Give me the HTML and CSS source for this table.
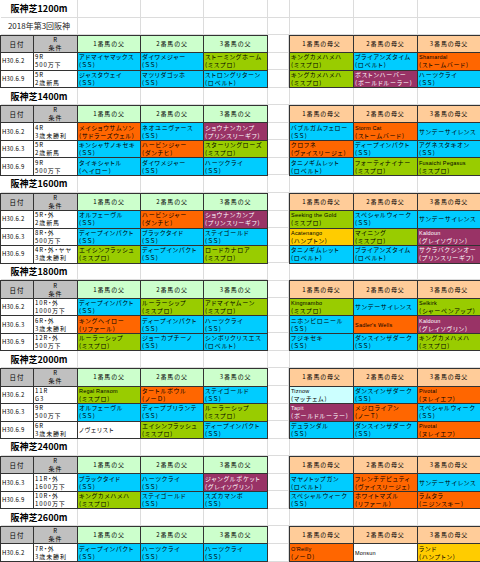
FILE: index.html
```html
<!DOCTYPE html>
<html lang="ja">
<head>
<meta charset="utf-8">
<title>阪神芝</title>
<link rel="stylesheet" href="styles.css">
</head>
<body>
<table class="sheet">
<colgroup>
<col class="c-date"><col class="c-r"><col class="c-a"><col class="c-a"><col class="c-b"><col class="c-gap"><col class="c-b"><col class="c-b"><col class="c-a">
</colgroup>
<tbody>
<!-- 1200m -->
<tr><td colspan="2" class="ttl">阪神芝1200m</td><td class="e"></td><td class="e"></td><td class="e"></td><td class="e"></td><td class="e"></td><td class="e"></td><td class="e"></td></tr>
<tr><td colspan="2" class="sub">2018年第3回阪神</td><td class="e"></td><td class="e"></td><td class="e"></td><td class="e"></td><td class="e"></td><td class="e"></td><td class="e"></td></tr>
<tr><td class="x hd big">日付</td><td class="x hd ctr">R<br>条件</td><td class="x hf ctr">1番馬の父</td><td class="x hf ctr">2番馬の父</td><td class="x hf ctr">3番馬の父</td><td class="e"></td><td class="x hm ctr">1番馬の母父</td><td class="x hm ctr">2番馬の母父</td><td class="x hm ctr">3番馬の母父</td></tr>
<tr><td class="x dt">H30.6.2</td><td class="x">9R<br>500万下</td><td class="x b">アドマイヤマックス<br>(ＳＳ)</td><td class="x b">ダイワメジャー<br>(ＳＳ)</td><td class="x g">ストーミングホーム<br>(ミスプロ)</td><td class="e"></td><td class="x g">キングカメハメハ<br>(ミスプロ)</td><td class="x b">ブライアンズタイム<br>(ロベルト)</td><td class="x o"><span class="en">Shamardal</span><br>(ストームバード)</td></tr>
<tr><td class="x dt">H30.6.9</td><td class="x">5R<br>2歳新馬</td><td class="x b">ジャスタウェイ<br>(ＳＳ)</td><td class="x b">マツリダゴッホ<br>(ＳＳ)</td><td class="x b">ストロングリターン<br>(ロベルト)</td><td class="e"></td><td class="x g">キングカメハメハ<br>(ミスプロ)</td><td class="x p">ボストンハーバー<br>(ボールドルーラー)</td><td class="x b">ハーツクライ<br>(ＳＳ)</td></tr>
<!-- 1400m -->
<tr><td colspan="2" class="ttl">阪神芝1400m</td><td class="e"></td><td class="e"></td><td class="e"></td><td class="e"></td><td class="e"></td><td class="e"></td><td class="e"></td></tr>
<tr><td class="x hd big">日付</td><td class="x hd ctr">R<br>条件</td><td class="x hf ctr">1番馬の父</td><td class="x hf ctr">2番馬の父</td><td class="x hf ctr">3番馬の父</td><td class="e"></td><td class="x hm ctr">1番馬の母父</td><td class="x hm ctr">2番馬の母父</td><td class="x hm ctr">3番馬の母父</td></tr>
<tr><td class="x dt">H30.6.2</td><td class="x">4R<br>3歳未勝利</td><td class="x o">メイショウサムソン<br>(サドラーズウェル)</td><td class="x b">ネオユニヴァース<br>(ＳＳ)</td><td class="x p">ショウナンカンプ<br>(プリンスリーギフ)</td><td class="e"></td><td class="x b">バブルガムフェロー<br>(ＳＳ)</td><td class="x o"><span class="en">Storm Cat</span><br>(ストームバード)</td><td class="x b">サンデーサイレンス</td></tr>
<tr><td class="x dt">H30.6.3</td><td class="x">5R<br>2歳新馬</td><td class="x b">キンシャサノキセキ<br>(ＳＳ)</td><td class="x o">ハービンジャー<br>(ダンチヒ)</td><td class="x g">スターリングローズ<br>(ミスプロ)</td><td class="e"></td><td class="x o">クロフネ<br>(ヴァイスリージェ)</td><td class="x b">ディープインパクト<br>(ＳＳ)</td><td class="x b">アグネスタキオン<br>(ＳＳ)</td></tr>
<tr><td class="x dt">H30.6.9</td><td class="x">9R<br>500万下</td><td class="x b">タイキシャトル<br>(ヘイロー)</td><td class="x b">ダイワメジャー<br>(ＳＳ)</td><td class="x b">ハーツクライ<br>(ＳＳ)</td><td class="e"></td><td class="x b">タニノギムレット<br>(ロベルト)</td><td class="x g">フォーティナイナー<br>(ミスプロ)</td><td class="x g"><span class="en">Fusaichi Pegasus</span><br>(ミスプロ)</td></tr>
<!-- 1600m -->
<tr><td colspan="2" class="ttl">阪神芝1600m</td><td class="e"></td><td class="e"></td><td class="e"></td><td class="e"></td><td class="e"></td><td class="e"></td><td class="e"></td></tr>
<tr><td class="x hd big">日付</td><td class="x hd ctr">R<br>条件</td><td class="x hf ctr">1番馬の父</td><td class="x hf ctr">2番馬の父</td><td class="x hf ctr">3番馬の父</td><td class="e"></td><td class="x hm ctr">1番馬の母父</td><td class="x hm ctr">2番馬の母父</td><td class="x hm ctr">3番馬の母父</td></tr>
<tr><td class="x dt">H30.6.2</td><td class="x">5R・外<br>2歳新馬</td><td class="x b">オルフェーヴル<br>(ＳＳ)</td><td class="x o">ハービンジャー<br>(ダンチヒ)</td><td class="x p">ショウナンカンプ<br>(プリンスリーギフ)</td><td class="e"></td><td class="x g"><span class="en">Seeking the Gold</span><br>(ミスプロ)</td><td class="x b">スペシャルウィーク<br>(ＳＳ)</td><td class="x b">サンデーサイレンス</td></tr>
<tr><td class="x dt">H30.6.3</td><td class="x">8R・外<br>500万下</td><td class="x b">ディープインパクト<br>(ＳＳ)</td><td class="x b">ブラックタイド<br>(ＳＳ)</td><td class="x b">ステイゴールド<br>(ＳＳ)</td><td class="e"></td><td class="x y"><span class="en">Acatenango</span><br>(ハンプトン)</td><td class="x g">マイニング<br>(ミスプロ)</td><td class="x p"><span class="en">Kaldoun</span><br>(グレイソヴリン)</td></tr>
<tr><td class="x dt">H30.6.9</td><td class="x">4R・外・ヤヤ<br>3歳未勝利</td><td class="x g">エイシンフラッシュ<br>(ミスプロ)</td><td class="x b">ディープインパクト<br>(ＳＳ)</td><td class="x g">ロードカナロア<br>(ミスプロ)</td><td class="e"></td><td class="x b">タニノギムレット<br>(ロベルト)</td><td class="x b">ブライアンズタイム<br>(ロベルト)</td><td class="x p">サクラバクシンオー<br>(プリンスリーギフ)</td></tr>
<!-- 1800m -->
<tr><td colspan="2" class="ttl">阪神芝1800m</td><td class="e"></td><td class="e"></td><td class="e"></td><td class="e"></td><td class="e"></td><td class="e"></td><td class="e"></td></tr>
<tr><td class="x hd big">日付</td><td class="x hd ctr">R<br>条件</td><td class="x hf ctr">1番馬の父</td><td class="x hf ctr">2番馬の父</td><td class="x hf ctr">3番馬の父</td><td class="e"></td><td class="x hm ctr">1番馬の母父</td><td class="x hm ctr">2番馬の母父</td><td class="x hm ctr">3番馬の母父</td></tr>
<tr><td class="x dt">H30.6.2</td><td class="x">10R・外<br>1000万下</td><td class="x b">ディープインパクト<br>(ＳＳ)</td><td class="x g">ルーラーシップ<br>(ミスプロ)</td><td class="x g">アドマイヤムーン<br>(ミスプロ)</td><td class="e"></td><td class="x g"><span class="en">Kingmambo</span><br>(ミスプロ)</td><td class="x b">サンデーサイレンス</td><td class="x g"><span class="en">Selkirk</span><br>(シャーペンアップ)</td></tr>
<tr><td class="x dt">H30.6.3</td><td class="x">6R・外<br>3歳未勝利</td><td class="x o">キングヘイロー<br>(リファール)</td><td class="x b">ディープインパクト<br>(ＳＳ)</td><td class="x b">ハーツクライ<br>(ＳＳ)</td><td class="e"></td><td class="x b">ニホンピロニール<br>(ＳＳ)</td><td class="x o"><span class="en">Sadler's Wells</span></td><td class="x p"><span class="en">Kaldoun</span><br>(グレイソヴリン)</td></tr>
<tr><td class="x dt">H30.6.9</td><td class="x">12R・外<br>500万下</td><td class="x g">ルーラーシップ<br>(ミスプロ)</td><td class="x b">ジョーカプチーノ<br>(ＳＳ)</td><td class="x b">シンボリクリスエス<br>(ロベルト)</td><td class="e"></td><td class="x b">フジキセキ<br>(ＳＳ)</td><td class="x b">ダンスインザダーク<br>(ＳＳ)</td><td class="x g">キングカメハメハ<br>(ミスプロ)</td></tr>
<!-- 2000m -->
<tr><td colspan="2" class="ttl">阪神芝2000m</td><td class="e"></td><td class="e"></td><td class="e"></td><td class="e"></td><td class="e"></td><td class="e"></td><td class="e"></td></tr>
<tr><td class="x hd big">日付</td><td class="x hd ctr">R<br>条件</td><td class="x hf ctr">1番馬の父</td><td class="x hf ctr">2番馬の父</td><td class="x hf ctr">3番馬の父</td><td class="e"></td><td class="x hm ctr">1番馬の母父</td><td class="x hm ctr">2番馬の母父</td><td class="x hm ctr">3番馬の母父</td></tr>
<tr><td class="x dt">H30.6.2</td><td class="x">11R<br>G3</td><td class="x g"><span class="en">Regal Ransom</span><br>(ミスプロ)</td><td class="x o">タートルボウル<br>(ノーＤ)</td><td class="x b">ステイゴールド<br>(ＳＳ)</td><td class="e"></td><td class="x c"><span class="en">Tiznow</span><br>(マッチェム)</td><td class="x b">ダンスインザダーク<br>(ＳＳ)</td><td class="x o"><span class="en">Pivotal</span><br>(ヌレイエフ)</td></tr>
<tr><td class="x dt">H30.6.3</td><td class="x">9R<br>500万下</td><td class="x b">オルフェーヴル<br>(ＳＳ)</td><td class="x b">ディープブリランテ<br>(ＳＳ)</td><td class="x g">ルーラーシップ<br>(ミスプロ)</td><td class="e"></td><td class="x p"><span class="en">Tapit</span><br>(ボールドルーラー)</td><td class="x o">メジロライアン<br>(ノーＴ)</td><td class="x b">スペシャルウィーク<br>(ＳＳ)</td></tr>
<tr><td class="x dt">H30.6.9</td><td class="x">6R<br>3歳未勝利</td><td class="x w">ノヴェリスト</td><td class="x g">エイシンフラッシュ<br>(ミスプロ)</td><td class="x b">ディープインパクト<br>(ＳＳ)</td><td class="e"></td><td class="x b">デュランダル<br>(ＳＳ)</td><td class="x b">ダンスインザダーク<br>(ＳＳ)</td><td class="x o"><span class="en">Pivotal</span><br>(ヌレイエフ)</td></tr>
<!-- 2400m -->
<tr><td colspan="2" class="ttl">阪神芝2400m</td><td class="e"></td><td class="e"></td><td class="e"></td><td class="e"></td><td class="e"></td><td class="e"></td><td class="e"></td></tr>
<tr><td class="x hd big">日付</td><td class="x hd ctr">R<br>条件</td><td class="x hf ctr">1番馬の父</td><td class="x hf ctr">2番馬の父</td><td class="x hf ctr">3番馬の父</td><td class="e"></td><td class="x hm ctr">1番馬の母父</td><td class="x hm ctr">2番馬の母父</td><td class="x hm ctr">3番馬の母父</td></tr>
<tr><td class="x dt">H30.6.3</td><td class="x">11R・外<br>1600万下</td><td class="x b">ブラックタイド<br>(ＳＳ)</td><td class="x b">ハーツクライ<br>(ＳＳ)</td><td class="x p">ジャングルポケット<br>(グレイソヴリン)</td><td class="e"></td><td class="x b">マヤノトップガン<br>(ロベルト)</td><td class="x o">フレンチデピュティ<br>(ヴァイスリージェ)</td><td class="x b">サンデーサイレンス</td></tr>
<tr><td class="x dt">H30.6.9</td><td class="x">10R・外<br>1000万下</td><td class="x g">キングカメハメハ<br>(ミスプロ)</td><td class="x b">ステイゴールド<br>(ＳＳ)</td><td class="x b">スズカマンボ<br>(ＳＳ)</td><td class="e"></td><td class="x b">スペシャルウィーク<br>(ＳＳ)</td><td class="x o">ホワイトマズル<br>(リファール)</td><td class="x o">ラムタラ<br>(ニジンスキー)</td></tr>
<!-- 2600m -->
<tr><td colspan="2" class="ttl">阪神芝2600m</td><td class="e"></td><td class="e"></td><td class="e"></td><td class="e"></td><td class="e"></td><td class="e"></td><td class="e"></td></tr>
<tr><td class="x hd big">日付</td><td class="x hd ctr">R<br>条件</td><td class="x hf ctr">1番馬の父</td><td class="x hf ctr">2番馬の父</td><td class="x hf ctr">3番馬の父</td><td class="e"></td><td class="x hm ctr">1番馬の母父</td><td class="x hm ctr">2番馬の母父</td><td class="x hm ctr">3番馬の母父</td></tr>
<tr><td class="x dt">H30.6.2</td><td class="x">7R・外<br>3歳未勝利</td><td class="x b">ディープインパクト<br>(ＳＳ)</td><td class="x b">ハーツクライ<br>(ＳＳ)</td><td class="x b">ハーツクライ<br>(ＳＳ)</td><td class="e"></td><td class="x o"><span class="en">O'Reilly</span><br>(ノーＤ)</td><td class="x w"><span class="en">Monsun</span></td><td class="x y">ランド<br>(ハンプトン)</td></tr>
</tbody>
</table>
</body>
</html>
```

FILE: styles.css
```css
html, body {
  margin: 0;
  padding: 0;
  background: #ffffff;
}

body {
  font-family: "Noto Sans CJK JP", "Noto Sans CJK SC", sans-serif;
  color: #000000;
}

.sheet {
  border-collapse: collapse;
  table-layout: fixed;
  width: 480px;
}

.c-date { width: 33px; }
.c-r { width: 44px; }
.c-a { width: 63px; }
.c-b { width: 64px; }
.c-gap { width: 22px; }

.sheet tr {
  height: 17.55px;
}

.sheet td {
  padding: 0 0 0 1px;
  font-size: 6px;
  line-height: 8px;
  letter-spacing: 0.9px;
  font-feature-settings: "palt";
  vertical-align: middle;
  white-space: nowrap;
  overflow: hidden;
  text-align: left;
}

.sheet td.e {
  padding: 0;
  box-shadow: inset -1px -1px 0 #dcdcdc;
}

.sheet td.ttl {
  box-shadow: inset -1px -1px 0 #dcdcdc;
  text-align: center;
  font-size: 9px;
  font-weight: bold;
  letter-spacing: 0;
  line-height: 12px;
  padding: 0;
}

.sheet td.sub {
  box-shadow: inset -1px -1px 0 #dcdcdc;
  text-align: center;
  font-size: 8px;
  letter-spacing: 0;
  line-height: 10px;
  color: #222222;
  padding: 0;
}

.sheet td.x {
  border: 1px solid #333333;
}

.sheet td.ctr {
  text-align: center;
  padding: 0;
}

.sheet td.big {
  text-align: center;
  padding: 0;
  font-size: 6.5px;
}

.sheet td.dt {
  letter-spacing: 0.2px;
}

.hd { background: #c0c0c0; }
.hf { background: #ccffcc; }
.hm { background: #ffcc99; }

.b { background: #00ccff; }
.g { background: #99cc00; }
.o { background: #ff6600; }
.p { background: #993366; color: #ffffff; }
.y { background: #ffcc00; }
.c { background: #ccffff; }
.w { background: #ffffff; }

.en {
  font-family: "Liberation Sans", Arial, sans-serif;
  font-size: 5.5px;
  letter-spacing: 0.2px;
}
```
